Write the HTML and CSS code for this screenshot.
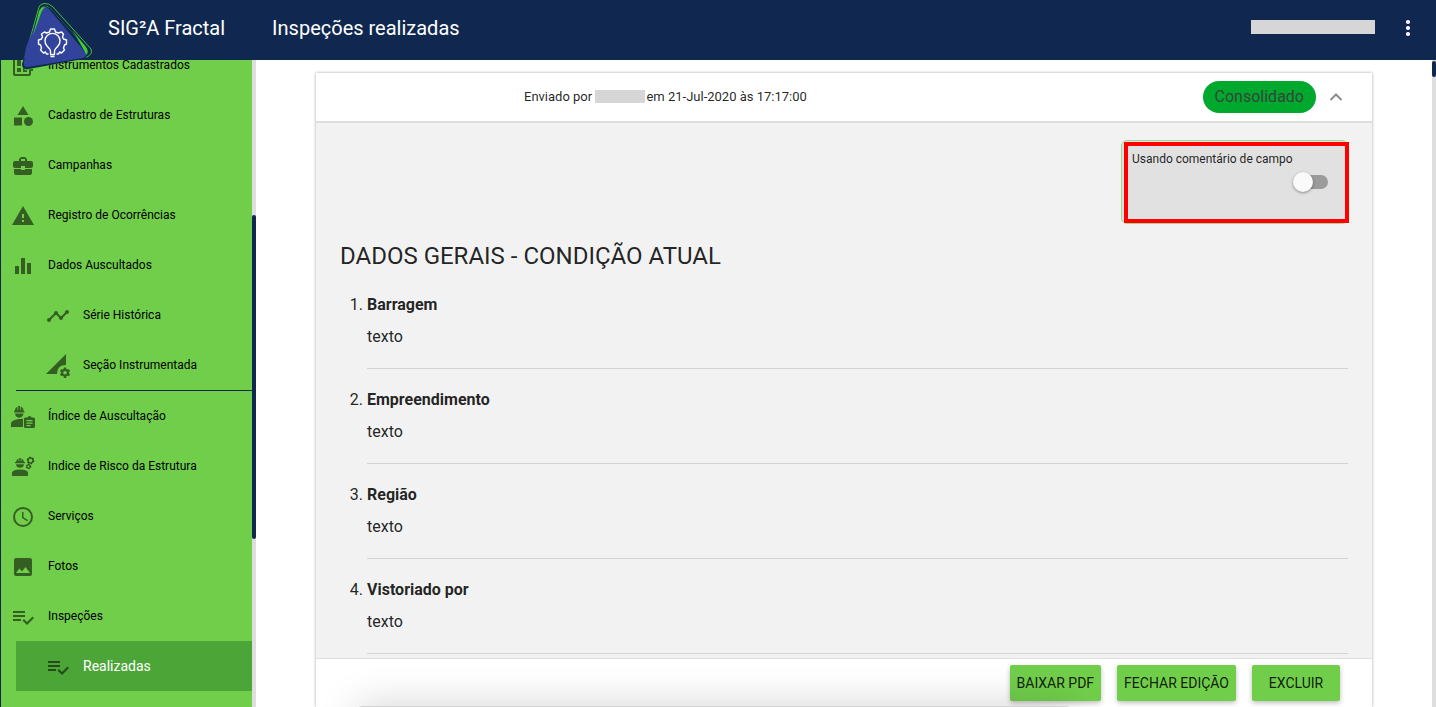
FILE: index.html
```
<!DOCTYPE html>
<html lang="pt-BR">
<head>
<meta charset="utf-8">
<meta name="viewport" content="width=device-width, initial-scale=1">
<title>SIG²A Fractal - Inspeções realizadas</title>
<link rel="stylesheet" href="styles.css">
</head>
<body>
<header class="topbar">
  <a class="logo" href="#" aria-label="Início">
    <svg width="72" height="72" viewBox="0 0 72 72" fill="none">
      <path d="M18 5L3 58L4 68L66 55Q72 52 70 47L32 5Q28 1 23 1.500Q19 2 18 5Z" stroke="#3fc62f" stroke-width="1"/>
      <path d="M20 6L4 58V68L64 54Q68 52 66 47L29 6Q24 2 20 6Z" fill="#3fd02f"/>
      <path d="M24 4Q21 5 19 13L8 42L1 62Q1 68 7 67L62 57Q68 56 64 50L56 36L29 6Z" fill="#10284f"/>
      <path d="M24 5Q21 5 20 9L5 45L3 60Q2 66 7 65L62 56Q67 54 64 50L28 7Q26 5 24 5Z" fill="#32439b"/>
      <path d="M18 9Q20 5 25 5Q22 6 20 11L12 34Z" fill="#3fd02f"/>
      <path d="M51 28L65 45Q68 50 65 52L62 45Z" fill="#3fd02f"/>
      <g transform="translate(2.500 0)" stroke="#fff" stroke-width="1.400" stroke-linejoin="round">
        <path d="M25 52H23L22 50L20 51L17 48L18 46L17 43L15 42V38L18 37L19 35L18 32L21 30L23 31L26 30L27 27H31L32 30L35 31L38 30L40 32L39 35L40 37L43 38V42L41 43L40 46L41 48L38 51L36 50L35 52H33"/>
        <path d="M27 52V49C27 47 25 46 23.500 44A7.500 7.500 0 1 1 34.500 44C33 46 31 47 31 49V52M26.500 52.500H31.500M27 54.500H31"/>
      </g>
    </svg>
  </a>
  <span class="brand">SIG²A Fractal</span>
  <h1 class="page-title">Inspeções realizadas</h1>
  <span class="user-name"></span>
  <button class="icon-button" type="button" aria-label="Mais opções">
    <svg width="24" height="24" viewBox="0 0 24 24" fill="currentColor"><circle cx="12" cy="6" r="2.100"/><circle cx="12" cy="12" r="2.100"/><circle cx="12" cy="18" r="2.100"/></svg>
  </button>
</header>

<div class="layout">
  <nav class="sidebar">
    <div class="menu">
      <a class="item" href="#"><svg class="icon" viewBox="0 0 24 24"><path fill-rule="evenodd" d="M4 2H18Q20 2 20 4V20Q20 22 18 22H4Q2 22 2 20V4Q2 2 4 2ZM4 4V20H18V4ZM6 6H10V12H6ZM12 6H16V9H12ZM12 11H16V18H12ZM6 14H10V18H6ZM20 10H22V12H20ZM20 15H22V17H20Z"/></svg>Instrumentos Cadastrados</a>
      <a class="item" href="#"><svg class="icon" viewBox="0 0 24 24"><path d="M12 2L17.500 11H6.500ZM3 13.500H11V21.500H3Z"/><circle cx="17.500" cy="17.500" r="4.500"/></svg>Cadastro de Estruturas</a>
      <a class="item" href="#"><svg class="icon" viewBox="0 0 24 24"><path d="M10 16V15H3V19C3 20.110 3.890 21 5 21H19C20.110 21 21 20.110 21 19V15H14V16H10M20 7H16V5L14 3H10L8 5V7H4C2.900 7 2 7.900 2 9V12C2 13.110 2.890 14 4 14H10V12H14V14H20C21.100 14 22 13.100 22 12V9C22 7.900 21.100 7 20 7M14 7H10V5H14V7Z"/></svg>Campanhas</a>
      <a class="item" href="#"><svg class="icon" viewBox="0 0 24 24"><path d="M1 21H23L12 2ZM13 18H11V16H13ZM13 14H11V10H13Z"/></svg>Registro de Ocorrências</a>
      <a class="item" href="#"><svg class="icon" viewBox="0 0 24 24"><path d="M4 12H8V20H4ZM10 4H14V20H10ZM16 9H20V20H16Z"/></svg>Dados Auscultados</a>
      <div class="submenu submenu-ruled">
        <a class="item sub" href="#"><svg class="icon" viewBox="0 0 24 24"><path d="M23 8C23 9.100 22.100 10 21 10C20.820 10 20.650 9.980 20.490 9.930L16.930 13.480C16.980 13.640 17 13.820 17 14C17 15.100 16.100 16 15 16S13 15.100 13 14C13 13.820 13.020 13.640 13.070 13.480L10.520 10.930C10.360 10.980 10.180 11 10 11S9.640 10.980 9.480 10.930L4.930 15.490C4.980 15.650 5 15.820 5 16C5 17.100 4.100 18 3 18S1 17.100 1 16S1.900 14 3 14C3.180 14 3.350 14.020 3.510 14.070L8.070 9.520C8.020 9.360 8 9.180 8 9C8 7.900 8.900 7 10 7S12 7.900 12 9C12 9.180 11.980 9.360 11.930 9.520L14.480 12.070C14.640 12.020 14.820 12 15 12S15.360 12.020 15.520 12.070L19.070 8.510C19.020 8.350 19 8.180 19 8C19 6.900 19.900 6 21 6S23 6.900 23 8Z"/></svg>Série Histórica</a>
        <a class="item sub" href="#"><svg class="icon" viewBox="0 0 24 24"><path d="M0 20L20 0V11Q11 11 11 20Z"/><path fill-rule="evenodd" d="M18 13.500H20L20.500 15L21.500 15.600L23 15.300L24 17L23 18.200V19.200L24 20.300L23 22L21.500 21.700L20.500 22.300L20 24H18L17.500 22.300L16.500 21.700L15 22L14 20.300L15 19.200V18.200L14 17L15 15.300L16.500 15.600L17.500 15ZM19 16.900A1.800 1.800 0 1 0 19 20.500A1.800 1.800 0 1 0 19 16.900Z"/></svg>Seção Instrumentada</a>
      </div>
      <a class="item" href="#"><svg class="icon" viewBox="0 0 24 24"><path fill-rule="evenodd" d="M3.500 6.200Q4 2.500 6.500 1.500V5H7.200V1H9V5H9.700V1.500Q12.500 2.500 12.700 6.200H13.500V7.500H3V6.200ZM4 8.600H12.500Q12 12.700 8.200 12.700T4 8.600ZM12 13.500V22H0V18.500Q0 15 8 14Q10 14 12 13.500ZM14 12.500H16.500Q16.700 11 18.500 11T20.500 12.500H22.500Q24 12.500 24 14V21.500Q24 23 22.500 23H14.500Q13 23 13 21.500V14Q13 12.500 14 12.500ZM15.500 15V16.300H21.500V15ZM15.500 17.500V18.700H21.500V17.500ZM15.500 20V21.200H19.500V20Z"/></svg>Índice de Auscultação</a>
      <a class="item" href="#"><svg class="icon" viewBox="0 0 24 24"><path d="M5 7Q5.500 4 7.500 3.500V6H8.200V3H9.800V6H10.500V3.500Q12.700 4 13 7H14V8.200H4V7ZM5 9.200H13Q12.700 12.700 9 12.700T5 9.200ZM1 21V18Q1 14.500 9 14.500T17 18V21Z"/><circle cx="19.500" cy="5.500" r="2.500" fill="none" stroke="currentColor" stroke-width="1.500"/><circle cx="19.500" cy="5.500" r="3.300" fill="none" stroke="currentColor" stroke-width="1.200" stroke-dasharray="1.500 1.950"/><circle cx="17.500" cy="11.500" r="1.600" fill="none" stroke="currentColor" stroke-width="1.300"/><circle cx="17.500" cy="11.500" r="2.300" fill="none" stroke="currentColor" stroke-dasharray="1.200 1.200"/></svg>Indice de Risco da Estrutura</a>
      <a class="item" href="#"><svg class="icon" viewBox="0 0 24 24"><path fill-rule="evenodd" d="M12 2A10 10 0 1 0 12 22A10 10 0 1 0 12 2ZM12 4A8 8 0 1 1 12 20A8 8 0 1 1 12 4ZM11 7H12.500V12.200L17 14.900L16.200 16.200L11 13Z"/></svg>Serviços</a>
      <a class="item" href="#"><svg class="icon" viewBox="0 0 24 24"><path d="M21 19V5C21 3.900 20.100 3 19 3H5C3.900 3 3 3.900 3 5V19C3 20.100 3.900 21 5 21H19C20.100 21 21 20.100 21 19ZM8.500 13.500L11 16.510L14.500 12L19 18H5Z"/></svg>Fotos</a>
      <a class="item" href="#"><svg class="icon" viewBox="0 0 24 24"><path d="M2 6H14V8H2ZM2 10H14V12H2ZM2 14H10V16H2ZM21.500 11.500L23 13L16 20L11.500 15.500L13 14L16 17Z"/></svg>Inspeções</a>
      <div class="submenu">
        <a class="item sub active" href="#" aria-current="page"><svg class="icon" viewBox="0 0 24 24"><path d="M2 6H14V8H2ZM2 10H14V12H2ZM2 14H10V16H2ZM21.500 11.500L23 13L16 20L11.500 15.500L13 14L16 17Z"/></svg>Realizadas</a>
      </div>
    </div>
    <div class="scroll-track"><div class="scroll-thumb menu-thumb"></div></div>
  </nav>

  <main class="content">
    <section class="panel">
      <header class="panel-header">
        <p class="sent">Enviado por <span class="sender"></span>em 21-Jul-2020 às 17:17:00</p>
        <span class="chip">Consolidado</span>
        <button class="collapse" type="button" aria-label="Recolher">
          <svg width="16" height="16" viewBox="0 0 16 16" fill="none" stroke="currentColor" stroke-width="2"><path d="M2.500 11L8 5.500L13.500 11"/></svg>
        </button>
      </header>
      <div class="panel-body">
        <div class="option">
          <label for="field-comment">Usando comentário de campo</label>
          <input class="switch" id="field-comment" type="checkbox" role="switch">
        </div>
        <h2 class="section-title">DADOS GERAIS - CONDIÇÃO ATUAL</h2>
        <ol class="fields">
          <li><strong>Barragem</strong><p>texto</p></li>
          <li><strong>Empreendimento</strong><p>texto</p></li>
          <li><strong>Região</strong><p>texto</p></li>
          <li><strong>Vistoriado por</strong><p>texto</p></li>
        </ol>
      </div>
      <footer class="actions">
        <button class="action" type="button">BAIXAR PDF</button>
        <button class="action" type="button">FECHAR EDIÇÃO</button>
        <button class="action" type="button">EXCLUIR</button>
        <div class="drawer-edge"></div>
      </footer>
    </section>
    <div class="scroll-track"><div class="scroll-thumb page-thumb"></div></div>
  </main>
</div>
</body>
</html>
```
FILE: styles.css
```
* { box-sizing: border-box; }

body {
  margin: 0;
  height: 100vh;
  display: flex;
  flex-direction: column;
  overflow: hidden;
  background: #fff;
  color: rgba(0, 0, 0, 0.87);
  font-family: Roboto, "Liberation Sans", sans-serif;
  font-size: 16px;
}

button { font: inherit; cursor: pointer; }
p, h1, h2 { margin: 0; font-weight: 400; }

.topbar {
  position: relative;
  z-index: 2;
  flex: none;
  display: flex;
  align-items: center;
  height: 60px;
  padding: 0 16px 4px 108px;
  background: #10284f;
  color: #fff;
  font-size: 20px;
}
.logo { position: absolute; left: 21px; top: 2px; }
.logo svg { display: block; }
.page-title { margin-left: 47px; font-size: 20px; }
.user-name { width: 124px; height: 14px; margin: 0 0 2px auto; background: #d6d6d6; }
.icon-button {
  display: flex;
  margin-left: 21px;
  padding: 0;
  border: 0;
  background: none;
  color: #fff;
}

.layout { flex: 1; min-height: 0; display: flex; }

.sidebar {
  flex: none;
  width: 256px;
  display: flex;
  overflow: hidden;
  border-left: 1px solid #10284f;
  background: #71ce4b;
}
.menu { flex: 1; margin-top: -20px; }
.item {
  display: flex;
  align-items: center;
  gap: 13px;
  height: 50px;
  padding-left: 10px;
  color: #000;
  font-size: 12px;
  text-decoration: none;
}
.icon {
  flex: none;
  width: 24px;
  height: 24px;
  margin-top: 2px;
  color: rgba(0, 0, 0, 0.54);
  fill: currentColor;
}
.submenu { margin-left: 15px; }
.submenu-ruled { border-bottom: 1px solid #10284f; }
.sub { padding-left: 30px; }
.active { background: #4ca637; color: #fff; font-size: 14px; }

.scroll-track { flex: none; width: 4px; background: #dedede; }
.scroll-thumb { border-radius: 2px; background: #10284f; }
.menu-thumb { height: 50%; margin-top: 155px; }
.page-thumb { height: 16px; margin-top: 1px; }

.content { flex: 1; min-width: 0; display: flex; }
.panel {
  flex: 1;
  min-width: 0;
  display: flex;
  flex-direction: column;
  margin: 13px 60px 0;
  box-shadow: 0 0 3px rgba(0, 0, 0, 0.35);
}
.panel-header {
  flex: none;
  display: flex;
  align-items: center;
  height: 50px;
  padding: 0 28px 0 208px;
  border-bottom: 2px solid #dedede;
}
.sent { padding-bottom: 2px; font-size: 13px; }
.sender {
  display: inline-block;
  width: 50px;
  height: 13px;
  margin-right: 1px;
  background: #d6d6d6;
  vertical-align: -2px;
}
.chip {
  margin-left: auto;
  padding: 0 12px;
  border-radius: 16px;
  background: #00a82d;
  color: #35463b;
  line-height: 32px;
}
.collapse {
  display: flex;
  margin-left: 12px;
  padding: 0;
  border: 0;
  background: none;
  color: #8c8c8c;
}

.panel-body {
  flex: 1;
  min-height: 0;
  overflow: hidden;
  padding: 17px 24px 0;
  background: #f2f2f2;
}
.option {
  position: relative;
  display: flex;
  flex-direction: column;
  width: 227px;
  height: 84px;
  margin-left: auto;
  padding: 8px 19px 0 10px;
  border: 1px solid #a5d68f;
  border-radius: 6px;
  background: #e1e1e1;
  font-size: 12px;
  line-height: 20px;
}
.option::after {
  content: "";
  position: absolute;
  inset: 1px -2px 0 2px;
  border: 4px solid #f00;
  pointer-events: none;
}
.switch {
  appearance: none;
  align-self: flex-end;
  display: flex;
  align-items: center;
  width: 34px;
  height: 14px;
  margin: 6px 0 0;
  border-radius: 7px;
  background: #9b9b9b;
}
.switch::before {
  content: "";
  flex: none;
  width: 20px;
  height: 20px;
  margin-left: -1px;
  border-radius: 50%;
  background: #fafafa;
  box-shadow: 0 1px 3px rgba(0, 0, 0, 0.4);
}
.switch:checked::before { margin-left: 15px; }

.section-title { margin-top: 16px; font-size: 24px; line-height: 32px; }
.fields { margin: 17px 0 0; padding-left: 27px; line-height: 32px; }
.fields li { margin-bottom: 15px; padding-bottom: 15px; border-bottom: 1px solid #d3d3d3; }

.actions {
  position: relative;
  flex: none;
  display: flex;
  justify-content: flex-end;
  gap: 16px;
  padding: 6px 32px;
  overflow: hidden;
  border-top: 1px solid #dedede;
  background: #fff;
}
.action {
  min-width: 88px;
  height: 36px;
  padding: 0 7px;
  border: 0;
  border-radius: 2px;
  background: #71ce4b;
  color: rgba(0, 0, 0, 0.87);
  font-size: 14px;
  box-shadow: 0 2px 5px rgba(0, 0, 0, 0.26);
}
.drawer-edge {
  position: absolute;
  top: 47px;
  left: 42px;
  right: 302px;
  height: 100px;
  border-radius: 4px;
  background: #d3d3d3;
  box-shadow: 0 0 40px rgba(0, 0, 0, 0.18);
  pointer-events: none;
}
```
